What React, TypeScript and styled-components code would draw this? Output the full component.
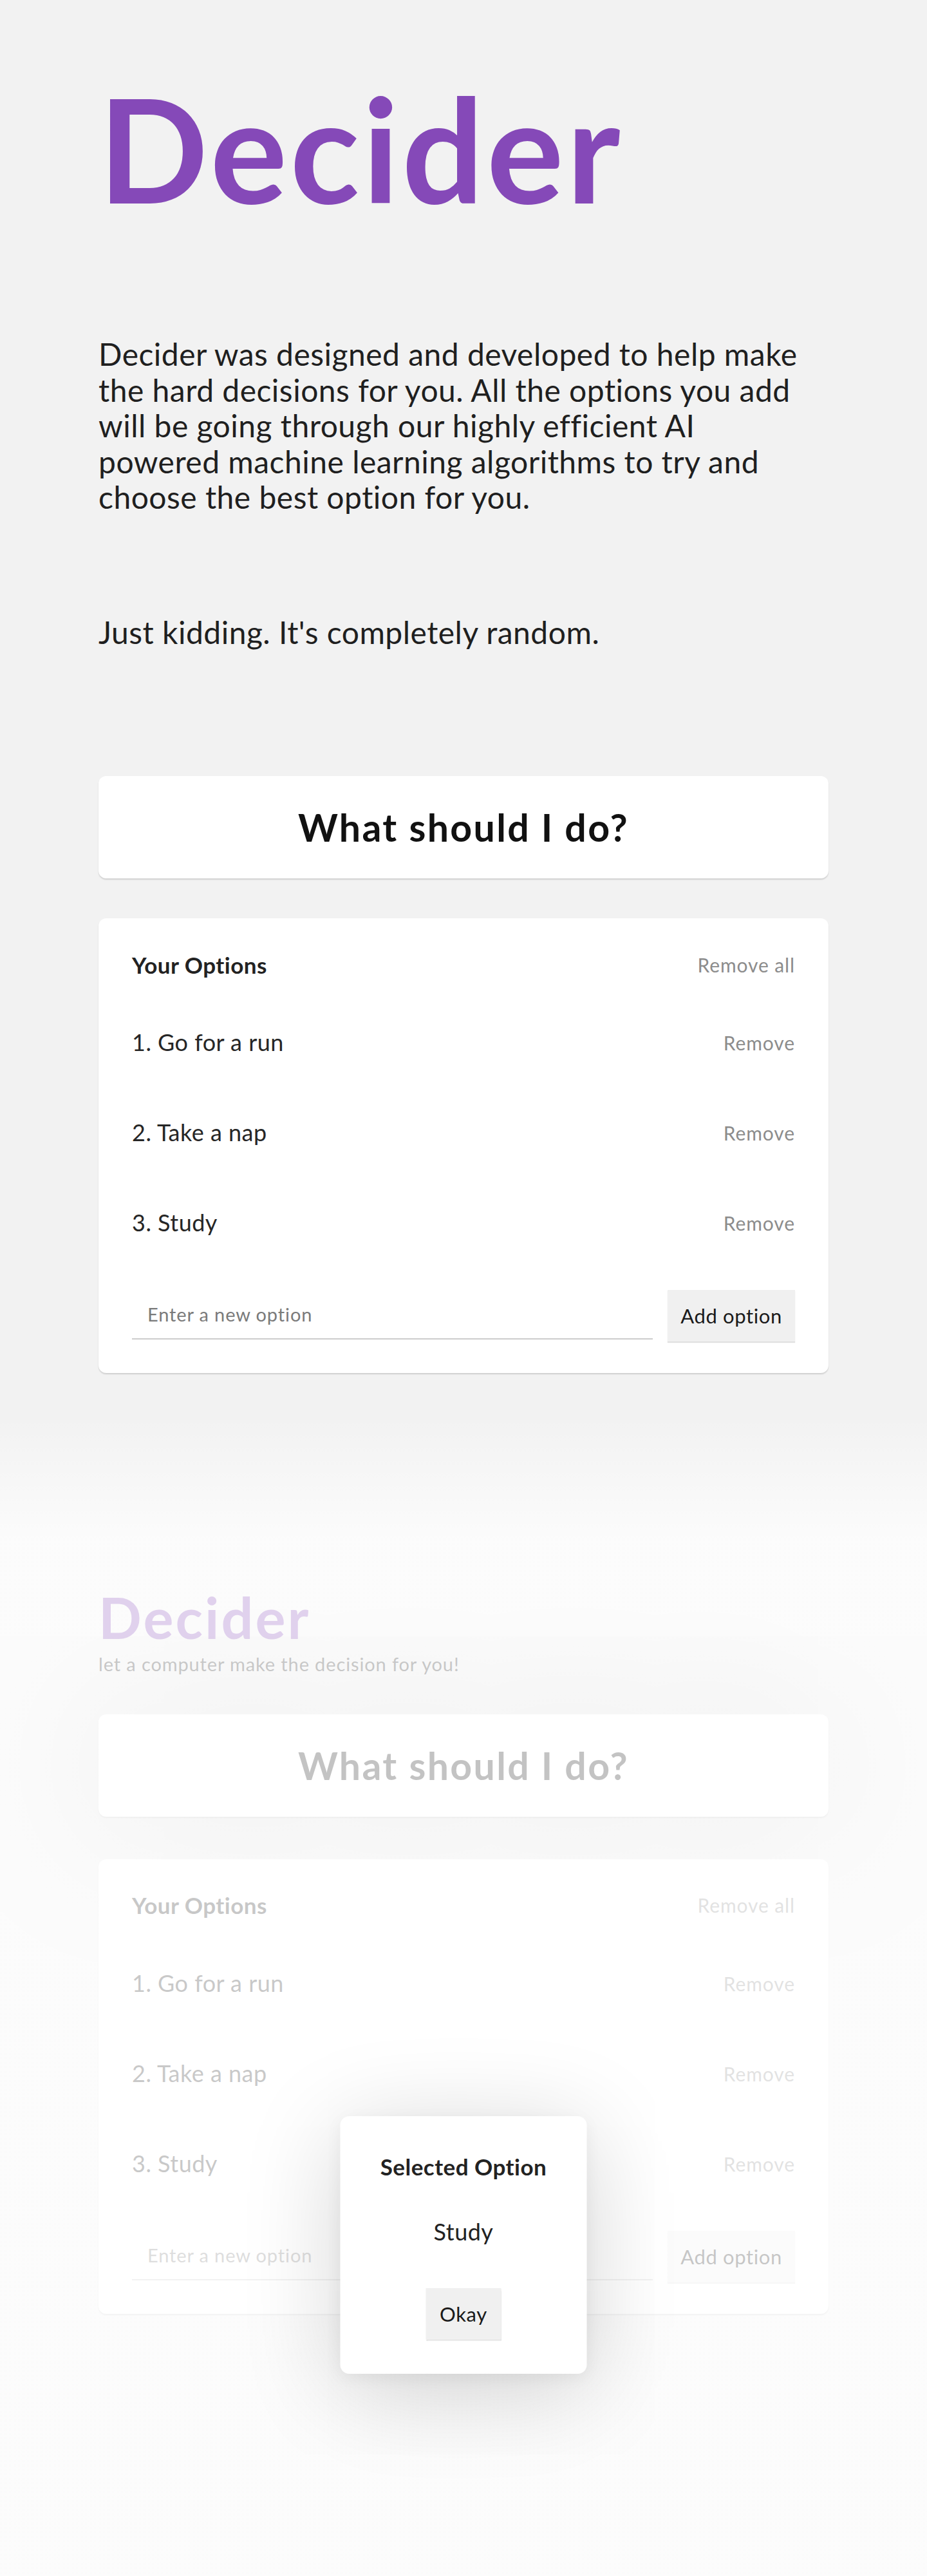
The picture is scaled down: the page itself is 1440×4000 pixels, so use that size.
import React from 'react';
import styled, { createGlobalStyle } from 'styled-components';

const options = ['Go for a run', 'Take a nap', 'Study'];

const introLines = [
  'Decider was designed and developed to help make',
  'the hard decisions for you. All the options you add',
  'will be going through our highly efficient AI',
  'powered machine learning algorithms to try and',
  'choose the best option for you.',
];

const GlobalStyle = createGlobalStyle`
  * { box-sizing: border-box; }
  body {
    margin: 0;
    background: #f2f2f2;
    font-family: "Lato", "Noto Sans", sans-serif;
    letter-spacing: 0.03em;
    color: #222;
  }
`;

// Layout
const Hero = styled.section`
  width: 1134px;
  height: 2200px;
  margin: 0 auto;
  padding-top: 118px;
`;

const BigTitle = styled.h1`
  margin: 0;
  font-size: 224px;
  line-height: 1;
  font-weight: 700;
  letter-spacing: 0.02em;
  color: #8549b8;
`;

const Lead = styled.p<{ $top: number }>`
  margin: ${({ $top }) => $top}px 0 0;
  font-size: 48px;
  line-height: 55.5px;
  font-weight: 400;
  color: #1f1f1f;
`;

const Stack = styled.div<{ $top: number; $gap: number }>`
  display: flex;
  flex-direction: column;
  gap: ${({ $gap }) => $gap}px;
  margin-top: ${({ $top }) => $top}px;
`;

// Cards
const QuestionCard = styled.button<{ $halo?: boolean }>`
  display: flex;
  align-items: center;
  justify-content: center;
  height: 159px;
  width: 100%;
  border: none;
  border-radius: 12px;
  background: #fff;
  box-shadow: ${({ $halo }) =>
    $halo
      ? '0 2px 2px rgba(0, 0, 0, 0.14), 0 0 240px rgba(0, 0, 0, 0.26)'
      : '0 2px 2px rgba(0, 0, 0, 0.14)'};
  font-family: inherit;
  font-size: 59px;
  font-weight: 700;
  letter-spacing: 0.04em;
  color: #111;
  cursor: pointer;
`;

const OptionsCard = styled.div`
  background: #fff;
  border-radius: 12px;
  box-shadow: 0 2px 2px rgba(0, 0, 0, 0.14);
  padding: 0 52px 49px;
`;

const OptionsHeader = styled.div`
  display: flex;
  align-items: center;
  justify-content: space-between;
  height: 123px;
  padding-top: 20px;
`;

const HeaderTitle = styled.h3`
  margin: 0;
  font-size: 35px;
  line-height: 1.2;
  font-weight: 700;
  color: #222;
`;

const LinkButton = styled.button`
  background: none;
  border: none;
  padding: 0;
  font-family: inherit;
  font-size: 30px;
  line-height: 1.2;
  font-weight: 400;
  letter-spacing: 0.03em;
  color: #8c8c8c;
  cursor: pointer;
`;

const OptionRow = styled.div`
  display: flex;
  align-items: center;
  justify-content: space-between;
  height: 140px;
`;

const OptionText = styled.p`
  margin: 0;
  font-size: 36px;
  line-height: 1.2;
  font-weight: 400;
  color: #262626;
`;

const AddForm = styled.form`
  display: flex;
  align-items: flex-start;
  gap: 23px;
  margin-top: 34px;
`;

const OptionInput = styled.input`
  flex: 1;
  height: 77px;
  padding: 0 0 0 24px;
  border: none;
  border-bottom: 2px solid #cdcdcd;
  background: transparent;
  font-family: inherit;
  font-size: 29px;
  font-weight: 400;
  letter-spacing: 0.03em;
  color: #222;
  outline: none;

  &::placeholder {
    color: #7a7a7a;
  }
`;

const GreyButton = styled.button<{ $w: number }>`
  width: ${({ $w }) => $w}px;
  height: 80px;
  border: none;
  background: #f0f0f0;
  box-shadow: 0 2px 1px rgba(0, 0, 0, 0.12);
  font-family: inherit;
  font-size: 31px;
  font-weight: 400;
  letter-spacing: 0.02em;
  color: #1a1a1a;
  cursor: pointer;
`;

// App preview with modal
const Preview = styled.section`
  position: relative;
  height: 1800px;
`;

const PreviewInner = styled.div`
  width: 1134px;
  margin: 0 auto;
  padding-top: 267px;
`;

const SmallTitle = styled.h1`
  margin: 0;
  font-size: 88px;
  line-height: 1;
  font-weight: 700;
  letter-spacing: 0.035em;
  color: #8549b8;
`;

const Subtitle = styled.h2`
  margin: 12px 0 0;
  font-size: 29px;
  line-height: 1.2;
  font-weight: 400;
  letter-spacing: 0.03em;
  color: #222;
`;

const Overlay = styled.div`
  position: absolute;
  inset: 0;
  background: linear-gradient(
    to bottom,
    rgba(255, 255, 255, 0) 0,
    rgba(255, 255, 255, 0.75) 190px
  );
`;

const Modal = styled.div`
  position: absolute;
  top: 1086px;
  left: 50%;
  transform: translateX(-50%);
  width: 383px;
  padding: 57px 20px 53px;
  display: flex;
  flex-direction: column;
  align-items: center;
  background: #fff;
  border-radius: 14px;
  box-shadow: 0 24px 150px rgba(0, 0, 0, 0.18), 0 6px 24px rgba(0, 0, 0, 0.05);
  text-align: center;
`;

const ModalTitle = styled.h3`
  margin: 0;
  font-size: 35px;
  line-height: 1.2;
  font-weight: 700;
  color: #222;
`;

const ModalBody = styled.p`
  margin: 59px 0 66px;
  font-size: 36px;
  line-height: 1.2;
  font-weight: 400;
  color: #222;
`;

const DeciderApp: React.FC<{ halo?: boolean; top: number; gap: number }> = ({ halo, top, gap }) => (
  <Stack $top={top} $gap={gap}>
    <QuestionCard $halo={halo}>What should I do?</QuestionCard>
    <OptionsCard>
      <OptionsHeader>
        <HeaderTitle>Your Options</HeaderTitle>
        <LinkButton>Remove all</LinkButton>
      </OptionsHeader>
      {options.map((option, i) => (
        <OptionRow key={option}>
          <OptionText>
            {i + 1}. {option}
          </OptionText>
          <LinkButton>Remove</LinkButton>
        </OptionRow>
      ))}
      <AddForm onSubmit={(e) => e.preventDefault()}>
        <OptionInput type="text" name="option" placeholder="Enter a new option" />
        <GreyButton $w={198}>Add option</GreyButton>
      </AddForm>
    </OptionsCard>
  </Stack>
);

export default function App() {
  return (
    <>
      <GlobalStyle />
      <Hero>
        <BigTitle>Decider</BigTitle>
        <Lead $top={180}>
          {introLines.map((line, i) => (
            <React.Fragment key={line}>
              {line}
              {i < introLines.length - 1 && <br />}
            </React.Fragment>
          ))}
        </Lead>
        <Lead $top={154}>Just kidding. It's completely random.</Lead>
        <DeciderApp top={196} gap={62} />
      </Hero>
      <Preview>
        <PreviewInner>
          <SmallTitle>Decider</SmallTitle>
          <Subtitle>let a computer make the decision for you!</Subtitle>
          <DeciderApp halo top={60} gap={66} />
        </PreviewInner>
        <Overlay />
        <Modal>
          <ModalTitle>Selected Option</ModalTitle>
          <ModalBody>Study</ModalBody>
          <GreyButton $w={117}>Okay</GreyButton>
        </Modal>
      </Preview>
    </>
  );
}
